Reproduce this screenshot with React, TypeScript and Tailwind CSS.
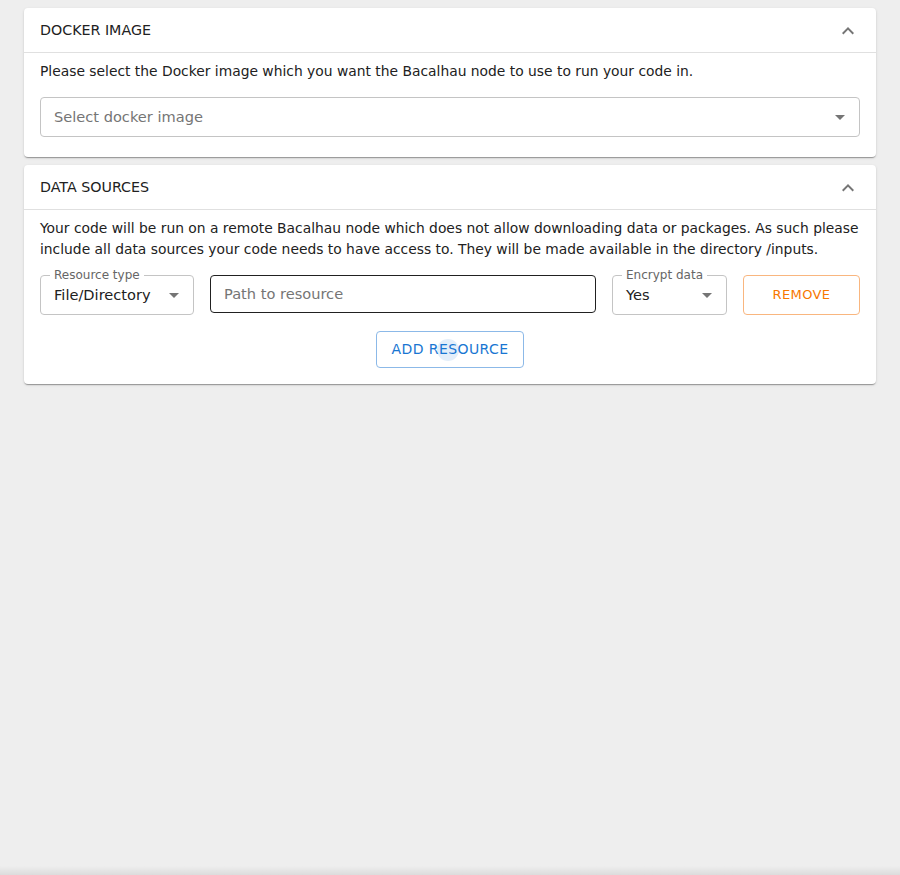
const ExpandLess = () => (
  <svg viewBox="0 0 24 24" className="h-6 w-6 fill-[#757575]">
    <path d="M12 8l-6 6 1.41 1.41L12 10.83l4.59 4.58L18 14z" />
  </svg>
);

const ArrowDrop = () => (
  <svg viewBox="0 0 24 24" className="h-6 w-6 fill-[#757575]">
    <path d="M7 10l5 5 5-5z" />
  </svg>
);

const Card = ({ title, children }: { title: string; children: React.ReactNode }) => (
  <section className="rounded-[4px] bg-white shadow-[0_2px_1px_-1px_rgba(0,0,0,0.2),0_1px_1px_0_rgba(0,0,0,0.14),0_1px_3px_0_rgba(0,0,0,0.12)]">
    <div className="flex h-[45px] items-center justify-between border-b border-[#e0e0e0] px-4 pt-[1px]">
      <span className="text-[14.25px] text-[#212121]">{title}</span>
      <ExpandLess />
    </div>
    {children}
  </section>
);

const OutlinedSelect = ({
  label,
  value,
  className,
}: {
  label: string;
  value: string;
  className: string;
}) => (
  <div
    className={`relative flex h-[40px] items-center justify-between rounded-[4px] border border-[#c4c4c4] pl-[13px] pr-[7px] ${className}`}
  >
    <span className="absolute -top-[8px] left-[9px] bg-white px-[4px] text-[12px] leading-[14px] text-[#666666]">
      {label}
    </span>
    <span className="text-[14.6px] text-[#212121]">{value}</span>
    <ArrowDrop />
  </div>
);

export default function App() {
  return (
    <div
      className="flex min-h-[875px] flex-col bg-[#eeeeee]"
      style={{ fontFamily: '"DejaVu Sans", sans-serif' }}
    >
      <div className="flex flex-col gap-2 px-6 pt-2">
        <Card title="DOCKER IMAGE">
          <div className="px-4 pb-5 pt-2">
            <p className="text-[13.85px] leading-[21px] text-[#212121]">
              Please select the Docker image which you want the Bacalhau node to use to run your code in.
            </p>
            <div className="mt-[15px] flex h-[40px] items-center justify-between rounded-[4px] border border-[#c4c4c4] pl-[13px] pr-[7px]">
              <span className="text-[14.6px] text-[#757575]">Select docker image</span>
              <ArrowDrop />
            </div>
          </div>
        </Card>

        <Card title="DATA SOURCES">
          <div className="px-4 pb-4 pt-2">
            <p className="text-[13.85px] leading-[21px] text-[#212121]">
              Your code will be run on a remote Bacalhau node which does not allow downloading data or packages. As such please include all data sources your code needs to have access to. They will be made available in the directory /inputs.
            </p>
            <div className="mt-[15px] flex items-start gap-4">
              <OutlinedSelect label="Resource type" value="File/Directory" className="w-[154px]" />
              <div className="flex h-[38px] flex-1 items-center rounded-[4px] border border-[#212121] px-[13px]">
                <span className="text-[14.6px] text-[#757575]">Path to resource</span>
              </div>
              <OutlinedSelect label="Encrypt data" value="Yes" className="w-[115px]" />
              <button className="h-[40px] w-[117px] rounded-[4px] border border-[#f9b67f] text-[13px] tracking-[0.4px] text-[#f77800]">
                REMOVE
              </button>
            </div>
            <div className="mt-4 flex justify-center">
              <button className="relative h-[37px] w-[148px] overflow-hidden rounded-[4px] border border-[#8cb9e8] text-[14px] tracking-[0.4px] text-[#1976d2]">
                <span className="absolute left-[60px] top-[7px] h-[22px] w-[22px] rounded-full bg-[rgba(25,118,210,0.12)]" />
                <span className="relative">ADD RESOURCE</span>
              </button>
            </div>
          </div>
        </Card>
      </div>
      <div className="flex-1" />
      <div className="h-[9px] bg-gradient-to-b from-[#eeeeee] to-[#dcdcdc]" />
    </div>
  );
}
